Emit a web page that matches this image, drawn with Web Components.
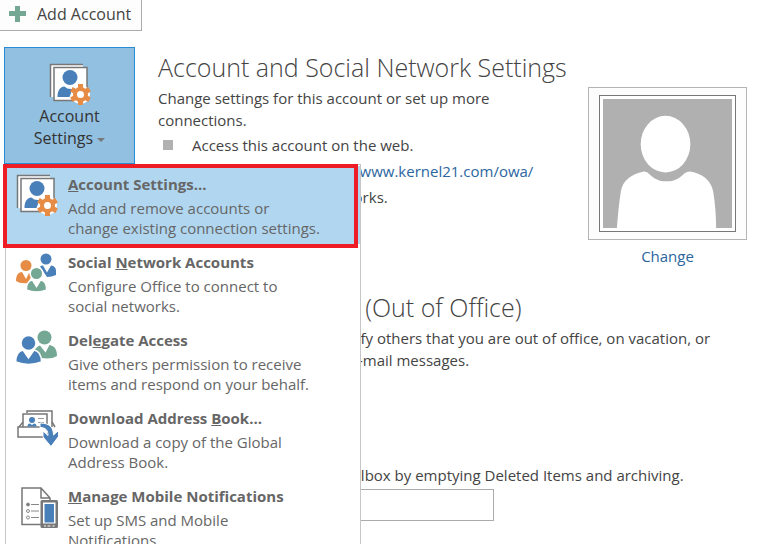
<!DOCTYPE html>
<html lang="en">
<head>
<meta charset="utf-8">
<title>Account Information</title>
<style>
  body {
    background: #ffffff;
    color: #444444;
    font-family: 'Open Sans', 'Noto Sans', sans-serif;
    font-size: 15px;
    line-height: 22px;
    margin: 0;
  }
</style>
</head>
<body>
<ol-account-page></ol-account-page>

<script>
const ICONS = {
  plus: `
    <svg width="18" height="18" viewBox="0 0 18 18">
      <path fill="#74a794" d="M6 1h5v5h6v5h-6v6H6v-6H0V6h6z"/>
    </svg>`,
  settings: `
    <svg width="42" height="42" viewBox="0 0 42 42">
      <path fill="#ffffff" d="M1 1h33v33H1z"/>
      <path fill="none" stroke="#777777" stroke-width="1.5" d="M34 1.500H1.500V34"/>
      <path fill="#ffffff" stroke="#777777" stroke-width="1.5" d="M5 4.500h33v33H5z"/>
      <circle cx="21" cy="14.500" r="7.500" fill="#4a80b9"/>
      <path fill="#4a80b9" d="M8.500 34c0-6 2-10 7-10.500q2.500 3 8 2.500l-3 8z"/>
      <circle cx="31.500" cy="31.500" r="9.500" fill="#ffffff"/>
      <g fill="#e78c45">
        <path d="M29 21h5v5h-5zM29 37h5v5h-5z"/>
        <path d="M29 21h5v5h-5zM29 37h5v5h-5z" transform="rotate(60 31.500 31.500)"/>
        <path d="M29 21h5v5h-5zM29 37h5v5h-5z" transform="rotate(120 31.500 31.500)"/>
      </g>
      <circle cx="31.500" cy="31.500" r="5.500" fill="none" stroke="#e78c45" stroke-width="4"/>
    </svg>`,
  social: `
    <svg width="42" height="42" viewBox="0 0 42 42">
      <g fill="#4a80b9">
        <circle cx="30" cy="7" r="5.500"/>
        <path d="M24 14.500q2-1.500 3-1l4 7 4-7q5 .5 5 5.500v4q-4 2-9 2z"/>
      </g>
      <g fill="#e78c45">
        <circle cx="10" cy="13.500" r="5.500"/>
        <path d="M0 29c0-6 2-8.500 6-9l4 7 3-6 3 2-4 8q-8 1-12-2z"/>
      </g>
      <g fill="#74a794" stroke="#ffffff" stroke-width="1.500">
        <circle cx="20.500" cy="21.500" r="6.300"/>
        <path d="M10.300 38c0-7 2-9.500 6.200-10l4 6.500 4-6.500c4 .5 6.200 3 6.200 10q-10 4-20.400 0z"/>
      </g>
    </svg>`,
  delegate: `
    <svg width="42" height="42" viewBox="0 0 42 42">
      <g fill="#74a794">
        <circle cx="28.500" cy="7.500" r="7"/>
        <path d="M19 20q1-3 5-4.500l5.500 7 4-7.500c5 1 7.500 4 7.500 11-4 2.500-10 3-15.500 2z"/>
      </g>
      <g fill="#4a80b9" stroke="#ffffff" stroke-width="1.500">
        <circle cx="12.500" cy="13" r="7.500"/>
        <path d="M-.3 32c0-8 2.500-11 7.300-12l5.500 8 5.500-8c5 1 7.500 4 7.500 12q-13 5-25.800 0z"/>
      </g>
    </svg>`,
  download: `
    <svg width="42" height="42" viewBox="0 0 42 42">
      <g fill="#ffffff" stroke="#777777" stroke-width="1.500">
        <path d="M11 5V3h25v16"/>
        <path d="M7 19V6h24v13"/>
        <path d="M36 14l3 5"/>
        <path d="M7 14l-4 5"/>
        <path d="M2 19h30v10H2z"/>
      </g>
      <path stroke="#999999" d="M22 10.500h6M22 14.500h6"/>
      <circle cx="16" cy="12" r="3" fill="#4a80b9"/>
      <path fill="#4a80b9" d="M11.500 18.500q0-3 2.500-3l2 1.500 2-1.500q2.500 0 2.500 3z"/>
      <path fill="#4a80b9" stroke="#ffffff" d="M24 15c10 0 13.500 5 13.500 12l5-4.500v6L35 38.500l-8-9.500v-6l5 4.500c0-5-2-8-8-8z"/>
    </svg>`,
  mobile: `
    <svg width="42" height="42" viewBox="0 0 42 42">
      <path fill="#ffffff" stroke="#777777" stroke-width="1.500" d="M25 38.500H6V2h19l9 10v4M25 2v10h9"/>
      <g fill="none" stroke="#888888">
        <circle cx="12" cy="18.500" r="1.500" fill="#777777"/>
        <circle cx="12" cy="25" r="1.500"/>
        <circle cx="12" cy="31.500" r="1.500"/>
        <path d="M15 18.500h8M15 25h8M15 31.500h8"/>
      </g>
      <rect x="24.500" y="14" width="17.500" height="28" rx="1.500" fill="#777777"/>
      <path fill="#ffffff" d="M27 16.500h12.500v21H27z"/>
      <path fill="#4a80b9" d="M28.500 18h9.500v18.500h-9.500z"/>
      <path fill="#ffffff" d="M28 39.500h2v1h-2zM31.500 39.500h3v1h-3zM36.500 39.500h2v1h-2z"/>
    </svg>`,
  person: `
    <svg width="100%" viewBox="0 0 130 130">
      <path fill="#b0b0b0" d="M0 0h130v130H0z"/>
      <ellipse cx="63" cy="45.500" rx="25" ry="28.500" fill="#ffffff"/>
      <path fill="#ffffff" d="M14 130c1-12 2-24 4-37 2-11 10-17 23-20 2 0 4 1 5 2 5 5 10 8 18 8s13-3 18-8c2-1 3-2 6-2 12 2 21 9 23 20 2 12 3 25 3 37z"/>
    </svg>`
};

class Icon extends HTMLElement {
  constructor() {
    super();

    const template = document.createElement( 'template' );
    template.innerHTML = /* template */ `
      <style>
        :host {
          display: block;
          flex-shrink: 0;
        }

        svg {
          display: block;
        }
      </style>
      <div aria-hidden="true"></div>
    `;

    // Root
    this.attachShadow( {mode: 'open'} );
    this.shadowRoot.appendChild( template.content.cloneNode( true ) );

    // Elements
    this.$holder = this.shadowRoot.querySelector( 'div' );
  }

  // Watched attributes
  static get observedAttributes() {
    return [
      'name'
    ];
  }

  // Observed attribute has changed
  attributeChangedCallback( name, old, value ) {
    this.$holder.innerHTML = ICONS[value] || '';
  }
}

window.customElements.define( 'ol-icon', Icon );

class AddButton extends HTMLElement {
  constructor() {
    super();

    const template = document.createElement( 'template' );
    template.innerHTML = /* template */ `
      <style>
        :host {
          display: block;
        }

        button {
          align-items: center;
          background: #fdfdfd;
          border: solid #ababab;
          border-width: 0 1px 1px 0;
          box-sizing: border-box;
          color: inherit;
          cursor: pointer;
          display: flex;
          font: inherit;
          font-size: 16px;
          gap: 10px;
          height: 31px;
          margin: 0;
          padding: 0 10px 2px 9px;
        }
      </style>
      <button type="button">
        <ol-icon name="plus"></ol-icon>
        <slot></slot>
      </button>
    `;

    // Root
    this.attachShadow( {mode: 'open'} );
    this.shadowRoot.appendChild( template.content.cloneNode( true ) );
  }
}

window.customElements.define( 'ol-add-button', AddButton );

class TileButton extends HTMLElement {
  constructor() {
    super();

    const template = document.createElement( 'template' );
    template.innerHTML = /* template */ `
      <style>
        :host {
          display: block;
        }

        button {
          align-items: center;
          background: #92c0e0;
          border: solid 1px #2a8dd4;
          box-sizing: border-box;
          color: #333333;
          cursor: pointer;
          display: flex;
          flex-direction: column;
          font: inherit;
          font-size: 16px;
          height: 117px;
          margin: 0;
          padding: 15px 8px 0 8px;
          width: 100%;
        }

        .arrow {
          border: solid transparent;
          border-top-color: #777777;
          border-width: 4px 4px 0 4px;
          display: inline-block;
          vertical-align: middle;
        }
      </style>
      <button type="button" aria-haspopup="menu" aria-expanded="true">
        <ol-icon name="settings"></ol-icon>
        <span><slot></slot><span class="arrow"></span></span>
      </button>
    `;

    // Root
    this.attachShadow( {mode: 'open'} );
    this.shadowRoot.appendChild( template.content.cloneNode( true ) );
  }
}

window.customElements.define( 'ol-tile-button', TileButton );

class MenuItem extends HTMLElement {
  constructor() {
    super();

    const template = document.createElement( 'template' );
    template.innerHTML = /* template */ `
      <style>
        :host {
          display: block;
          position: relative;
        }

        button {
          align-items: flex-start;
          background: none;
          border: none;
          box-sizing: border-box;
          color: #666666;
          cursor: pointer;
          display: flex;
          font: inherit;
          gap: 10px;
          line-height: 20px;
          margin: 0;
          min-height: 78px;
          padding: 8px 8px 6px 10px;
          text-align: left;
          width: 100%;
        }

        .title {
          display: block;
          font-weight: 700;
          padding-bottom: 4px;
        }

        :host( [selected] ) button {
          background: #b0d6f0;
        }

        /* Frame over the menu edges */
        :host( [selected] )::after {
          border: solid 4px #ee1c25;
          content: '';
          inset: -2px 2px -4px -3px;
          pointer-events: none;
          position: absolute;
        }
      </style>
      <button type="button" role="menuitem">
        <ol-icon></ol-icon>
        <span>
          <span class="title"><slot name="title"></slot></span>
          <slot></slot>
        </span>
      </button>
    `;

    // Root
    this.attachShadow( {mode: 'open'} );
    this.shadowRoot.appendChild( template.content.cloneNode( true ) );

    // Elements
    this.$icon = this.shadowRoot.querySelector( 'ol-icon' );
  }

  // Setup
  connectedCallback() {
    this.$icon.setAttribute( 'name', this.getAttribute( 'icon' ) );
  }
}

window.customElements.define( 'ol-menu-item', MenuItem );

class Menu extends HTMLElement {
  constructor() {
    super();

    const template = document.createElement( 'template' );
    template.innerHTML = /* template */ `
      <style>
        :host {
          background: #ffffff;
          border: solid 1px #c6c6c6;
          box-sizing: border-box;
          display: block;
          padding: 1px 0 1px 0;
          width: 356px;
        }
      </style>
      <div role="menu"><slot></slot></div>
    `;

    // Root
    this.attachShadow( {mode: 'open'} );
    this.shadowRoot.appendChild( template.content.cloneNode( true ) );
  }
}

window.customElements.define( 'ol-menu', Menu );

class InfoSection extends HTMLElement {
  constructor() {
    super();

    const template = document.createElement( 'template' );
    template.innerHTML = /* template */ `
      <style>
        :host {
          column-gap: 23px;
          display: grid;
          grid-template-columns: 131px minmax( 0, 1fr ) auto;
          min-height: 117px;
        }

        .action {
          position: relative;
        }

        .body {
          padding-top: 4px;
        }

        h2 {
          color: #444444;
          font-size: 25px;
          font-weight: 300;
          line-height: 32px;
          margin: 0 0 4px 0;
          white-space: nowrap;
        }
      </style>
      <div class="action"><slot name="action"></slot></div>
      <div class="body">
        <h2><slot name="heading"></slot></h2>
        <slot></slot>
      </div>
      <slot name="aside"></slot>
    `;

    // Root
    this.attachShadow( {mode: 'open'} );
    this.shadowRoot.appendChild( template.content.cloneNode( true ) );
  }
}

window.customElements.define( 'ol-info-section', InfoSection );

class Photo extends HTMLElement {
  constructor() {
    super();

    const template = document.createElement( 'template' );
    template.innerHTML = /* template */ `
      <style>
        :host {
          align-items: center;
          display: flex;
          flex-direction: column;
          gap: 5px;
          padding-top: 40px;
        }

        .outer {
          background: #fdfdfd;
          border: solid 1px #b4b4b4;
          padding: 7px 10px 7px 10px;
        }

        .frame {
          background: #ffffff;
          border: solid 1px #777777;
          padding: 3px;
          width: 129px;
        }

        a {
          color: #2b66a0;
          text-decoration: none;
        }
      </style>
      <div class="outer">
        <div class="frame"><ol-icon name="person"></ol-icon></div>
      </div>
      <a href="#change">Change</a>
    `;

    // Root
    this.attachShadow( {mode: 'open'} );
    this.shadowRoot.appendChild( template.content.cloneNode( true ) );
  }
}

window.customElements.define( 'ol-photo', Photo );

class AccountPage extends HTMLElement {
  constructor() {
    super();

    const template = document.createElement( 'template' );
    template.innerHTML = /* template */ `
      <style>
        :host {
          box-sizing: border-box;
          display: block;
          height: 100vh;
          overflow: hidden;
        }

        main {
          display: flex;
          flex-direction: column;
          gap: 20px;
          padding: 16px 28px 0 4px;
        }

        p {
          margin: 0;
        }

        ul {
          list-style: none;
          margin: 0;
          padding: 1px 0 0 5px;
        }

        li {
          align-items: center;
          display: flex;
          gap: 19px;
          line-height: 26px;
          white-space: nowrap;
        }

        li::before {
          background: #b1b1b1;
          content: '';
          height: 10px;
          width: 10px;
        }

        a {
          color: #2b66a0;
          text-decoration: none;
        }

        input {
          border: solid 1px #ababab;
          box-sizing: border-box;
          display: block;
          height: 32px;
          margin: 3px 0 0 0;
          width: 336px;
        }

        /* Drops down from the tile */
        ol-menu {
          left: 1px;
          position: absolute;
          top: 117px;
          z-index: 1;
        }
      </style>
      <ol-add-button>Add Account</ol-add-button>
      <main>
        <ol-info-section>
          <ol-tile-button slot="action">Account<br>Settings </ol-tile-button>
          <ol-menu slot="action">
            <ol-menu-item icon="settings" selected>
              <span slot="title"><u>A</u>ccount Settings...</span>
              Add and remove accounts or<br>change existing connection settings.
            </ol-menu-item>
            <ol-menu-item icon="social">
              <span slot="title">Social <u>N</u>etwork Accounts</span>
              Configure Office to connect to<br>social networks.
            </ol-menu-item>
            <ol-menu-item icon="delegate">
              <span slot="title">Del<u>e</u>gate Access</span>
              Give others permission to receive<br>items and respond on your behalf.
            </ol-menu-item>
            <ol-menu-item icon="download">
              <span slot="title">Download Address <u>B</u>ook...</span>
              Download a copy of the Global<br>Address Book.
            </ol-menu-item>
            <ol-menu-item icon="mobile">
              <span slot="title"><u>M</u>anage Mobile Notifications</span>
              Set up SMS and Mobile<br>Notifications.
            </ol-menu-item>
          </ol-menu>
          <span slot="heading">Account and Social Network Settings</span>
          <p>Change settings for this account or set up more connections.</p>
          <ul>
            <li>Access this account on the web.</li>
            <li><a href="#owa">Outlook web app http://www.kernel21.com/owa/</a></li>
            <li>Connect on social networks.</li>
          </ul>
          <ol-photo slot="aside"></ol-photo>
        </ol-info-section>
        <ol-info-section>
          <span slot="heading">Automatic Replies (Out of Office)</span>
          <p>Add automatic replies to notify others that you are out of office, on vacation, or<br>not available to respond to e-mail messages.</p>
        </ol-info-section>
        <ol-info-section>
          <span slot="heading">Mailbox Cleanup</span>
          <label for="quota">Manage the size for your mailbox by emptying Deleted Items and archiving.</label>
          <input id="quota" type="text">
        </ol-info-section>
      </main>
    `;

    // Root
    this.attachShadow( {mode: 'open'} );
    this.shadowRoot.appendChild( template.content.cloneNode( true ) );
  }
}

window.customElements.define( 'ol-account-page', AccountPage );
</script>
</body>
</html>
